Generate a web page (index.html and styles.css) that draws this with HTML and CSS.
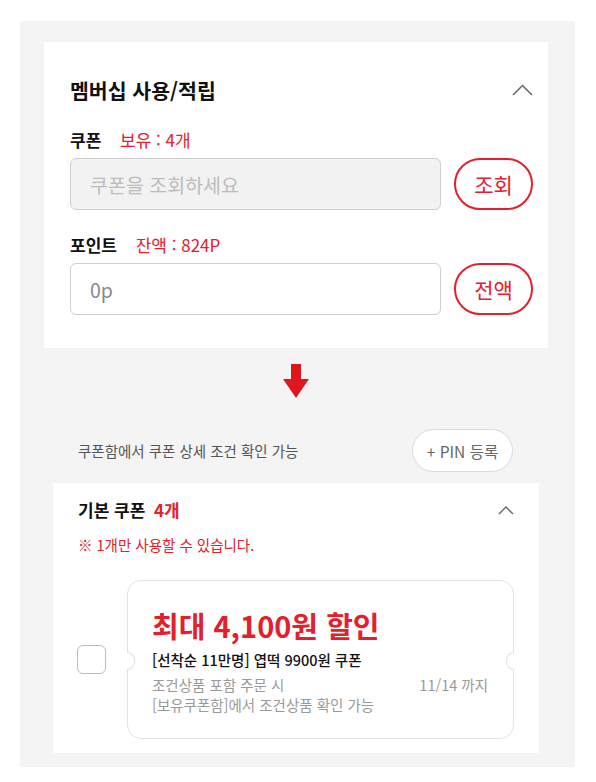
FILE: index.html
```html
<!DOCTYPE html>
<html lang="ko">
<head>
  <meta charset="UTF-8">
  <meta name="viewport" content="width=device-width, initial-scale=1.0">
  <title>멤버십 사용/적립</title>
  <link rel="stylesheet" href="styles.css">
</head>
<body>
  <div class="wrap">
    <div class="member">
      <div class="member-head">
        <h2>멤버십 사용/적립</h2>
        <svg class="chevron" width="21" height="12" viewBox="0 0 21 12"><polyline points="1,11 10.5,1.5 20,11" fill="none" stroke="#666" stroke-width="1.5"/></svg>
      </div>

      <div class="field-label first">쿠폰 <span class="red">보유 : 4개</span></div>
      <div class="field-row">
        <div class="input disabled">쿠폰을 조회하세요</div>
        <button class="pill">조회</button>
      </div>

      <div class="field-label">포인트 <span class="red">잔액 : 824P</span></div>
      <div class="field-row">
        <div class="input">0p</div>
        <button class="pill">전액</button>
      </div>
    </div>

    <div class="arrow">
      <svg width="26" height="34" viewBox="0 0 26 34"><polygon points="8,0 18,0 18,15 26,15 13,34 0,15 8,15" fill="#e0161c"/></svg>
    </div>

    <div class="info-row">
      <span class="info">쿠폰함에서 쿠폰 상세 조건 확인 가능</span>
      <button class="pin">+ PIN 등록</button>
    </div>

    <div class="coupons">
      <div class="coupons-head">
        <h3>기본 쿠폰 <span class="red">4개</span></h3>
        <svg class="chevron" width="16" height="9" viewBox="0 0 16 9"><polyline points="1,8 8,1 15,8" fill="none" stroke="#666" stroke-width="1.4"/></svg>
      </div>
      <p class="notice">※ 1개만 사용할 수 있습니다.</p>

      <div class="coupon-row">
        <span class="check"></span>
        <div class="ticket">
          <div class="ticket-title">최대 4,100원 할인</div>
          <div class="ticket-name">[선착순 11만명] 엽떡 9900원 쿠폰</div>
          <div class="ticket-meta">
            <div class="ticket-cond">
              <div>조건상품 포함 주문 시</div>
              <div>[보유쿠폰함]에서 조건상품 확인 가능</div>
            </div>
            <div class="ticket-date">11/14 까지</div>
          </div>
        </div>
      </div>
    </div>
  </div>
</body>
</html>
```

FILE: styles.css
```css
body {
  margin: 0;
  background: #ffffff;
  font-family: "Noto Sans CJK KR", "Noto Sans", sans-serif;
  color: #111;
}
.wrap {
  margin: 21px 21px 15px 20px;
  background: #f4f4f4;
  padding: 21px 27px 14px 24px;
}
.red {
  color: #e3202c;
  font-weight: 400;
}

/* membership card */
.member {
  background: #ffffff;
  padding: 34px 15px 33px 26px;
}
.member-head {
  display: flex;
  justify-content: space-between;
  align-items: center;
}
.member-head h2 {
  margin: 0;
  font-size: 20.5px;
  line-height: 28px;
  font-weight: 700;
}
.field-label {
  margin-top: 24px;
  font-size: 17px;
  line-height: 22px;
  font-weight: 700;
}
.field-label.first {
  margin-top: 25px;
}
.field-label .red {
  margin-left: 14px;
}
.field-row {
  display: flex;
  align-items: center;
  gap: 13px;
  margin-top: 7px;
}
.input {
  flex: 1;
  height: 52px;
  box-sizing: border-box;
  border: 1px solid #cfcfcf;
  border-radius: 6px;
  padding: 0 19px;
  display: flex;
  align-items: center;
  font-size: 19.5px;
  color: #888;
  background: #ffffff;
}
.input.disabled {
  background: #f2f2f2;
  color: #bcbcbc;
}
.pill {
  width: 79px;
  height: 52px;
  border: 2px solid #e3202c;
  border-radius: 26px;
  background: #ffffff;
  color: #e3202c;
  font-family: inherit;
  font-size: 21px;
  padding: 0;
}

/* arrow */
.arrow {
  display: flex;
  justify-content: center;
  padding: 16px 0 0 0;
  height: 34px;
}

/* info row */
.info-row {
  display: flex;
  justify-content: space-between;
  align-items: center;
  margin: 31px 9px 0 9px;
  padding: 0 26px 0 25px;
}
.info {
  font-size: 14.5px;
  color: #555;
}
.pin {
  width: 101px;
  height: 43px;
  border: 1px solid #dadada;
  border-radius: 22px;
  background: #ffffff;
  color: #666;
  font-family: inherit;
  font-size: 15.5px;
  padding: 0;
}

/* coupon list */
.coupons {
  background: #ffffff;
  margin: 11px 9px 0 9px;
  padding: 15px 25px 14px 24px;
}
.coupons-head {
  display: flex;
  justify-content: space-between;
  align-items: center;
  padding-left: 1px;
}
.coupons-head h3 {
  margin: 0;
  font-size: 17px;
  line-height: 24px;
  font-weight: 700;
}
.coupons-head .red {
  font-weight: 700;
  margin-left: 4px;
}
.notice {
  margin: 13px 0 0 1px;
  font-size: 14.5px;
  line-height: 20px;
  color: #e3202c;
}
.coupon-row {
  display: flex;
  align-items: center;
  gap: 21px;
  margin-top: 25px;
}
.check {
  width: 29px;
  height: 29px;
  box-sizing: border-box;
  border: 1px solid #bdbdbd;
  border-radius: 6px;
  background: #ffffff;
}
.ticket {
  position: relative;
  flex: 1;
  border: 1px solid #e2e2e2;
  border-radius: 14px;
  padding: 26px 25px 24px 24px;
}
.ticket::before,
.ticket::after {
  content: "";
  position: absolute;
  top: 50%;
  width: 7px;
  height: 16px;
  margin-top: -8px;
  background: #ffffff;
  border: 1px solid #e2e2e2;
}
.ticket::before {
  left: -1px;
  border-left: none;
  border-radius: 0 8px 8px 0;
}
.ticket::after {
  right: -1px;
  border-right: none;
  border-radius: 8px 0 0 8px;
}
.ticket-title {
  font-size: 29px;
  line-height: 36px;
  font-weight: 700;
  color: #e3202c;
}
.ticket-name {
  margin-top: 7px;
  font-size: 14.5px;
  line-height: 20px;
  font-weight: 500;
  color: #111;
}
.ticket-meta {
  display: flex;
  justify-content: space-between;
  margin-top: 5px;
  font-size: 14.5px;
  line-height: 19.5px;
  color: #999;
}
```
